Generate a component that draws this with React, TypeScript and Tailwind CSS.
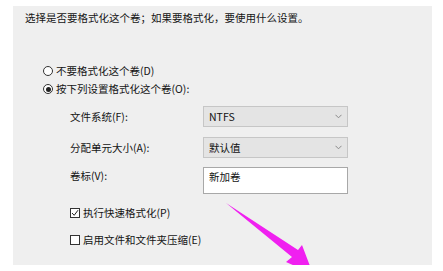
import React from "react";

const font = { fontFamily: '"Noto Sans CJK SC", "Microsoft YaHei", sans-serif' };

function Chevron() {
  return (
    <svg width="7" height="5" viewBox="0 0 7 5" className="mr-[5px]">
      <path d="M0.5 0.8 L3.5 3.8 L6.5 0.8" fill="none" stroke="#8a8a8a" strokeWidth="1" />
    </svg>
  );
}

function Combo({ value }: { value: string }) {
  return (
    <div className="w-[145px] h-[21px] bg-[#e4e4e4] border border-[#c6c6c6] flex items-center justify-between">
      <span className="pl-[5px] text-[10.5px] leading-[14px] text-[#111]">{value}</span>
      <Chevron />
    </div>
  );
}

export default function App() {
  return (
    <div className="w-[443px] h-[271px] bg-white" style={font}>
      <div className="relative overflow-hidden ml-[13px] pt-[5px] mt-[6px] w-[419px] h-[259px] bg-[#efefef] text-[#141414] text-[10.5px] leading-[14px]">
        <div className="pl-[12px]">选择是否要格式化这个卷；如果要格式化，要使用什么设置。</div>

        <div className="mt-[39px] pl-[30px] flex items-center gap-[3px]">
          <span className="w-[10px] h-[10px] rounded-full border border-[#333] bg-white" />
          <span>不要格式化这个卷(D)</span>
        </div>
        <div className="mt-[4px] pl-[30px] flex items-center gap-[3px]">
          <span className="w-[10px] h-[10px] rounded-full border border-[#333] bg-white flex items-center justify-center">
            <span className="w-[5px] h-[5px] rounded-full bg-[#222]" />
          </span>
          <span>按下列设置格式化这个卷(O):</span>
        </div>

        <div className="mt-[10px] pl-[57px] flex flex-col gap-[10px]">
          <div className="flex items-center">
            <span className="w-[133px]">文件系统(F):</span>
            <Combo value="NTFS" />
          </div>
          <div className="flex items-center">
            <span className="w-[133px]">分配单元大小(A):</span>
            <Combo value="默认值" />
          </div>
          <div className="flex items-start -mt-[1px]">
            <span className="w-[133px] pt-[2px]">卷标(V):</span>
            <div className="w-[145px] h-[27px] bg-white border border-[#a8a8a8] pl-[5px] pt-[2px]">新加卷</div>
          </div>
        </div>

        <div className="mt-[12px] pl-[57px] flex items-center gap-[3px]">
          <span className="w-[10px] h-[10px] border border-[#333] bg-white flex items-center justify-center">
            <svg width="8" height="8" viewBox="0 0 8 8">
              <path d="M1 4 L3.2 6.3 L7 1.2" fill="none" stroke="#222" strokeWidth="1" />
            </svg>
          </span>
          <span>执行快速格式化(P)</span>
        </div>
        <div className="mt-[13px] pl-[57px] flex items-center gap-[3px]">
          <span className="w-[10px] h-[10px] border border-[#333] bg-white" />
          <span>启用文件和文件夹压缩(E)</span>
        </div>

        <svg className="absolute left-0 top-0" width="419" height="259" viewBox="0 0 419 259">
          <polygon
            points="213,197 285,244 289,239 300,268 273,256 279,251"
            fill="#f020f0"
          />
        </svg>
      </div>
    </div>
  );
}
